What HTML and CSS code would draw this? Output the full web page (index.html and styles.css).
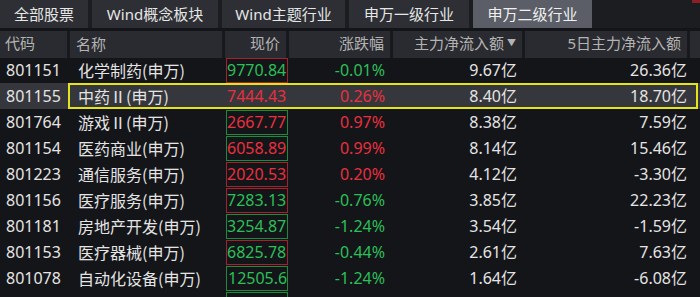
FILE: index.html
```html
<!DOCTYPE html>
<html lang="zh-CN">
<head>
<meta charset="utf-8">
<title>申万二级行业</title>
<link rel="stylesheet" href="styles.css">
</head>
<body>
<div class="app">
  <div class="tabs">
    <div class="tab t1">全部股票</div>
    <div class="tab t2">Wind概念板块</div>
    <div class="tab t3">Wind主题行业</div>
    <div class="tab t4">申万一级行业</div>
    <div class="tab t5 active">申万二级行业</div>
    <div class="tab-rest"><span class="corner"></span></div>
  </div>
  <div class="head">
    <div class="hc left">代码</div>
    <div class="hc left name">名称</div>
    <div class="hc right">现价</div>
    <div class="hc right">涨跌幅</div>
    <div class="hc right">主力净流入额<span class="tri">▼</span></div>
    <div class="hc right">5日主力净流入额</div>
    <div class="hc end"></div>
  </div>
  <div class="rows">
    <div class="row"><div class="c code">801151</div><div class="c name">化学制药(申万)</div><div class="c price"><span class="box bred down">9770.84</span></div><div class="c chg down">-0.01%</div><div class="c flow">9.67亿</div><div class="c flow5">26.36亿</div></div>
    <div class="row sel"><div class="c code">801155</div><div class="c name">中药Ⅱ(申万)</div><div class="c price"><span class="box bnone up">7444.43</span></div><div class="c chg up">0.26%</div><div class="c flow">8.40亿</div><div class="c flow5">18.70亿</div><div class="selbox"></div></div>
    <div class="row"><div class="c code">801764</div><div class="c name">游戏Ⅱ(申万)</div><div class="c price"><span class="box bgreen up">2667.77</span></div><div class="c chg up">0.97%</div><div class="c flow">8.38亿</div><div class="c flow5">7.59亿</div></div>
    <div class="row"><div class="c code">801154</div><div class="c name">医药商业(申万)</div><div class="c price"><span class="box bgreen up">6058.89</span></div><div class="c chg up">0.99%</div><div class="c flow">8.14亿</div><div class="c flow5">15.46亿</div></div>
    <div class="row"><div class="c code">801223</div><div class="c name">通信服务(申万)</div><div class="c price"><span class="box bred up">2020.53</span></div><div class="c chg up">0.20%</div><div class="c flow">4.12亿</div><div class="c flow5">-3.30亿</div></div>
    <div class="row"><div class="c code">801156</div><div class="c name">医疗服务(申万)</div><div class="c price"><span class="box bred down">7283.13</span></div><div class="c chg down">-0.76%</div><div class="c flow">3.85亿</div><div class="c flow5">22.23亿</div></div>
    <div class="row"><div class="c code">801181</div><div class="c name">房地产开发(申万)</div><div class="c price"><span class="box bgreen down">3254.87</span></div><div class="c chg down">-1.24%</div><div class="c flow">3.54亿</div><div class="c flow5">-1.59亿</div></div>
    <div class="row"><div class="c code">801153</div><div class="c name">医疗器械(申万)</div><div class="c price"><span class="box bred down">6825.78</span></div><div class="c chg down">-0.44%</div><div class="c flow">2.61亿</div><div class="c flow5">7.63亿</div></div>
    <div class="row"><div class="c code">801078</div><div class="c name">自动化设备(申万)</div><div class="c price"><span class="box bgreen down clip">12505.65</span></div><div class="c chg down">-1.24%</div><div class="c flow">1.64亿</div><div class="c flow5">-6.08亿</div></div>
    <div class="row"><div class="c code"></div><div class="c name"></div><div class="c price"><span class="box bgreen down"></span></div><div class="c chg"></div><div class="c flow"></div><div class="c flow5"></div></div>
  </div>
</div>
</body>
</html>
```

FILE: styles.css
```css
* { box-sizing: border-box; }
html, body {
  margin: 0;
  padding: 0;
  background: #141519;
  overflow: hidden;
}
body {
  width: 700px;
  height: 297px;
  font-family: "Noto Sans", "Noto Sans CJK SC", sans-serif;
  font-size: 16px;
  color: #e4e4e4;
}
.app { width: 700px; }

.tabs {
  display: flex;
  gap: 4px;
  height: 28px;
  background: #1c1d21;
}
.tab {
  background: #2d2f34;
  color: #e6e6e6;
  font-size: 15px;
  line-height: 28px;
  text-align: center;
  white-space: nowrap;
}
.t1 { width: 88px; }
.t2 { width: 126px; }
.t3 { width: 123px; }
.t4 { width: 120px; }
.t5 { width: 119px; }
.tab.active { background: #5b5e67; color: #f0f0f0; }
.tab-rest { flex: 1; position: relative; }
.corner {
  position: absolute;
  right: 0;
  top: 0;
  width: 8px;
  height: 3px;
  background: #8a1f25;
}

.head {
  display: grid;
  grid-template-columns: 70px 155px 64px 104px 132px 165px 10px;
  height: 25px;
  margin-top: 3px;
  margin-bottom: 1px;
  background: #18191c;
}
.hc {
  background: #2a2b30;
  color: #b3b3b3;
  font-size: 15px;
  line-height: 25px;
  border-right: 3px solid #18191c;
  white-space: nowrap;
}
.hc.left { padding-left: 5px; }
.hc.name { padding-left: 6px; }
.hc.right { text-align: right; padding-right: 6px; }
.hc.end { border-right: 0; }
.tri { font-size: 9px; margin-left: 3px; position: relative; top: -3px; }

.row {
  position: relative;
  display: grid;
  grid-template-columns: 70px 155px 64px 104px 132px 165px 10px;
  height: 26px;
  align-items: center;
  white-space: nowrap;
}
.row.sel { background: #36373c; }
.selbox {
  position: absolute;
  left: 68px;
  right: 2px;
  top: 0;
  bottom: 0;
  border: 2px solid #e4e41c;
  pointer-events: none;
}
.c { line-height: 26px; }
.code { padding-left: 6px; }
.name { padding-left: 8px; font-family: "Noto Sans CJK SC", sans-serif; }
.price { padding-left: 1px; height: 26px; display: flex; align-items: center; }
.box {
  display: block;
  width: 62px;
  height: 25px;
  line-height: 23px;
  border: 1px solid transparent;
  text-align: right;
  padding-right: 1px;
  overflow: hidden;
}
.box.clip { text-align: left; padding-left: 1px; }
.bred { border-color: #a3222c; }
.bgreen { border-color: #1f8a3e; }
.bnone { border-color: transparent; }
.chg { text-align: right; padding-right: 8px; }
.flow { text-align: right; padding-right: 8px; }
.flow5 { text-align: right; padding-right: 3px; }
.up { color: #e8303e; }
.down { color: #2cbf58; }
```
